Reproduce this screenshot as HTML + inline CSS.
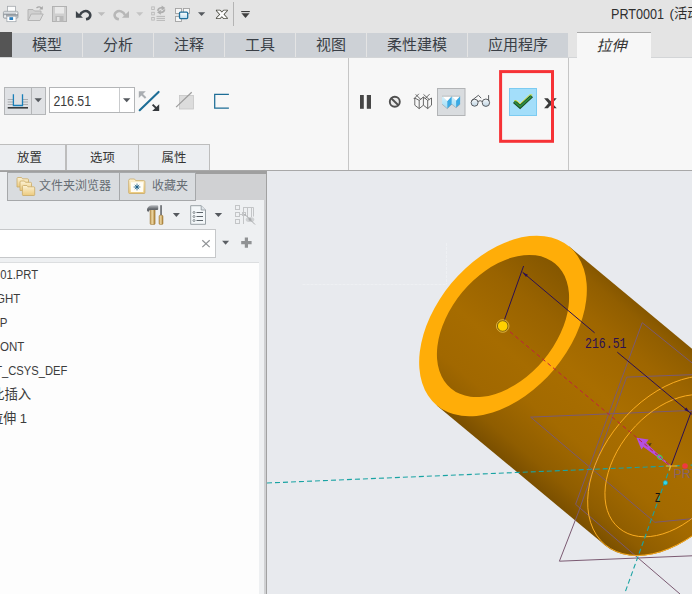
<!DOCTYPE html>
<html lang="zh-CN">
<head>
<meta charset="utf-8">
<title>PRT0001</title>
<style>
html,body{margin:0;padding:0;}
body{width:692px;height:594px;overflow:hidden;position:relative;background:#f7f7f7;
 font-family:"Liberation Sans","Noto Sans CJK SC",sans-serif;color:#3c3c3c;}
.abs{position:absolute;}
#qbar{left:0;top:0;width:692px;height:32px;background:#e4e4e4;}
#title{left:611.5px;top:0;font-size:14.6px;color:#2e2e2e;white-space:nowrap;line-height:20px;}
#t1{position:absolute;left:-1px;top:4px;transform:scaleX(.865);transform-origin:0 50%;}
#t2{position:absolute;left:58px;top:3.5px;font-size:13.4px;}
#tabrow{left:0;top:32px;width:692px;height:26px;background:#e4e4e4;}
.tab{position:absolute;top:33px;height:25px;background:#cdd1d6;color:#3a3f46;font-size:15px;line-height:24px;text-align:center;}
#darkblk{left:0;top:32px;width:12px;height:26px;background:#555;}
#acttab{left:577px;top:32px;width:74px;height:27px;background:#f7f7f7;border-top:1px solid #a9a9a9;box-sizing:border-box;padding-right:5px;
 font-size:15px;line-height:26px;text-align:center;font-style:italic;color:#333;}
#ribbon{left:0;top:58px;width:692px;height:112px;background:#f7f7f7;}
.vsep{position:absolute;width:1px;background:#c9c9c9;}
.stab{position:absolute;top:144px;height:26px;box-sizing:border-box;border:1px solid #bdbdbd;border-bottom:none;background:#eceef1;
 font-size:12.4px;line-height:27px;text-align:center;color:#333;}
#hline{left:0;top:170px;width:692px;height:1px;background:#a8a8a8;}
#lp{left:0;top:171px;width:267px;height:423px;background:#eef0f2;}
#lptop{left:0;top:171px;width:267px;height:3px;background:#9f9f9f;}
#lptabs{left:0;top:174px;width:266px;height:26px;background:#d0d1d3;}
.lptab{position:absolute;top:172px;height:29px;box-sizing:border-box;background:#d9dcdf;border:1px solid #a6a8aa;
 font-size:12px;line-height:26px;color:#666c73;white-space:nowrap;}
#lpborder{left:264px;top:174px;width:3px;height:420px;background:#d0d1d3;border-right:1px solid #a1a1a1;box-sizing:border-box;}
#search{left:-1px;top:229px;width:217px;height:29px;box-sizing:border-box;border:1px solid #c6c8ca;background:#fff;}
#tree{left:0;top:262px;width:259px;height:332px;background:#fdfdfd;border-top:1px solid #dcdee0;box-sizing:border-box;}
.ti{position:absolute;font-size:13.4px;color:#3c3c3c;white-space:nowrap;line-height:16px;transform-origin:100% 50%;}
#vp{left:267px;top:171px;width:425px;height:423px;background:#e8eaee;}
</style>
</head>
<body>
<div class="abs" id="qbar"></div>
<svg class="abs" style="left:0;top:0" width="260" height="32" viewBox="0 0 260 32">
<!-- printer -->
<g>
<defs><linearGradient id="prn" x1="0" y1="0" x2="0" y2="1"><stop offset="0" stop-color="#eef0f2"/><stop offset="0.30" stop-color="#c9cdd1"/><stop offset="0.50" stop-color="#858b92"/><stop offset="0.68" stop-color="#b9bdc2"/><stop offset="1" stop-color="#e4e6e9"/></linearGradient></defs>
<rect x="7.500" y="6.300" width="8" height="6" fill="#fcfcfc" stroke="#a4a8ad" stroke-width="0.800"/>
<rect x="3.400" y="11.300" width="14.600" height="7" rx="1.300" fill="url(#prn)" stroke="#8d939a" stroke-width="0.700"/>
<rect x="6.900" y="16.200" width="9.100" height="5.500" fill="#ffffff" stroke="#9aa0a6" stroke-width="0.700"/>
<rect x="9.400" y="17.200" width="3.700" height="2.800" fill="#2a7fc0"/>
<rect x="4.400" y="14.800" width="1.300" height="2.200" fill="#ffffff"/><rect x="16" y="13" width="1.200" height="1.200" fill="#ffffff"/>
</g>
<!-- open folder (disabled) -->
<g fill="#d0d0d0" stroke="#b4b4b4" stroke-width="1">
<path d="M28 20.5 V9.5 h5 l1.5 1.5 h6.5 v3"/>
<path d="M28 20.5 l3.2-6.5 h12 l-3.2 6.5 z" fill="#dadada"/>
<path d="M36.5 8 q3-2.5 5 0.5" fill="none" stroke="#a8a8a8" stroke-width="1.4"/>
<path d="M42.8 6 v3.6 h-3.6 z" fill="#a8a8a8" stroke="none"/>
</g>
<!-- save (disabled) -->
<g>
<rect x="52.5" y="6.5" width="14" height="15" fill="#cfcfcf" stroke="#b2b2b2"/>
<rect x="55" y="7" width="9" height="6.5" fill="#e9e9e9"/>
<rect x="55.5" y="16" width="8" height="5.5" fill="#b9b9b9"/>
<rect x="57" y="17" width="2.5" height="4" fill="#e4e4e4"/>
</g>
<!-- undo -->
<path d="M79.800 15.400 C81.200 11.200 86 9.900 88.800 12.200 C91.600 14.800 90.400 18.600 86 19.300" fill="none" stroke="#3d4349" stroke-width="2.500" stroke-linecap="butt"/>
<path d="M75.900 10.900 V17.700 H83 z" fill="#3d4349"/>
<path d="M97.800 12.200 h7.400 l-3.700 3.900 z" fill="#bdbdbd"/>
<!-- redo (disabled) -->
<path d="M125.100 15.400 C123.700 11.200 118.900 9.900 116.100 12.200 C113.300 14.800 114.500 18.600 118.900 19.300" fill="none" stroke="#b7b7b7" stroke-width="2.500"/>
<path d="M129 10.900 V17.700 H121.900 z" fill="#b7b7b7"/>
<path d="M136.200 12.200 h7 l-3.500 3.800 z" fill="#c4c4c4"/>
<!-- regenerate list (disabled) -->
<g fill="none" stroke="#b9b9b9" stroke-width="0.900">
<rect x="151.700" y="6.900" width="2.600" height="2.600"/><rect x="151.700" y="12.300" width="2.600" height="2.600"/><rect x="151.700" y="17.500" width="2.600" height="2.600"/>
<path d="M156.500 16.400 h8.500 M156.500 18.400 h8.500 M156.500 20.400 h8.500" stroke-width="1"/>
<path d="M157.800 10.800 q0.600-3.400 4.400-3 M164.600 9.400 q-0.600 3.400 -4.400 3" stroke-width="1.700" stroke="#aeaeae"/>
</g>
<path d="M161.600 5.400 l3.800 2.600 l-3.800 2.400 z M160.800 14.800 l-3.800-2.600 l3.800-2.400 z" fill="#aeaeae"/>
<!-- windows -->
<defs><linearGradient id="wn" x1="0" y1="0" x2="0" y2="1"><stop offset="0" stop-color="#ffffff"/><stop offset="1" stop-color="#b9dcf0"/></linearGradient></defs>
<g>
<rect x="175.500" y="8.500" width="6" height="5" fill="#f6f6f6" stroke="#a2a2a2" stroke-width="0.900"/>
<rect x="183.500" y="8.500" width="6" height="5" fill="#f6f6f6" stroke="#a2a2a2" stroke-width="0.900"/>
<rect x="175.500" y="16.500" width="6" height="5" fill="#f6f6f6" stroke="#a2a2a2" stroke-width="0.900"/>
<rect x="179.500" y="12.200" width="8.200" height="6.400" rx="1" fill="url(#wn)" stroke="#1f6f9c" stroke-width="1.300"/>
</g>
<path d="M198 12.200 h7.200 l-3.600 3.900 z" fill="#55595e"/>
<!-- close -->
<g stroke="#46463c" stroke-width="1.500" stroke-linejoin="round" fill="#46463c">
<path d="M216.600 10.400 H219.900 L227.100 18.200 H223.800 z"/><path d="M227.100 10.400 H223.800 L216.600 18.200 H219.900 z"/>
</g>
<g fill="#fdfdfd"><path d="M216.600 10.400 H219.900 L227.100 18.200 H223.800 z"/><path d="M227.100 10.400 H223.800 L216.600 18.200 H219.900 z"/></g>
<rect x="233" y="2" width="1" height="24" fill="#b4b4b4"/>
<rect x="241.200" y="11" width="8.600" height="1.100" fill="#3f3f3f"/>
<path d="M241.400 13.300 h8.200 l-4.100 4.700 z" fill="#3f3f3f"/>
</svg>
<div class="abs" id="title"><span id="t1">PRT0001</span><span id="t2">(活动</span></div>
<div class="abs" id="tabrow"></div>
<div class="abs" id="darkblk"></div>
<div class="tab" style="left:12px;width:70px;">模型</div>
<div class="tab" style="left:83px;width:70px;">分析</div>
<div class="tab" style="left:154px;width:70px;">注释</div>
<div class="tab" style="left:225px;width:70px;">工具</div>
<div class="tab" style="left:296px;width:70px;">视图</div>
<div class="tab" style="left:367px;width:100px;">柔性建模</div>
<div class="tab" style="left:468px;width:100px;">应用程序</div>
<div class="abs" id="ribbon"></div>
<div class="abs" style="left:0;top:57px;width:692px;height:1px;background:#d3d5d7;"></div>
<div class="abs" id="acttab">拉伸</div>
<svg class="abs" style="left:0;top:58px" width="692" height="112" viewBox="0 58 692 112" font-family="'Liberation Sans','Noto Sans CJK SC',sans-serif">
<!-- separators -->
<rect x="348" y="58" width="1" height="112" fill="#c6c6c6"/>
<rect x="568" y="58" width="1" height="112" fill="#c6c6c6"/>
<!-- depth-type split button -->
<rect x="4.500" y="87.500" width="41" height="27" fill="#dfe1e4" stroke="#b4b6b8"/>
<rect x="31" y="88" width="1" height="26" fill="#b4b6b8"/>
<path d="M7.700 99.500 H13 M22.800 99.500 H28 M7.700 102 H13 M22.800 102 H28 M7.700 104.500 H13 M22.800 104.500 H28" stroke="#a4a6a8" stroke-width="0.900" fill="none"/>
<path d="M13.400 94.200 V105.500 H22.500 V94.200" stroke="#1a7fb8" stroke-width="1.300" fill="none"/>
<path d="M7.700 107.800 H28" stroke="#3a3c3e" stroke-width="1.600" fill="none"/>
<path d="M34.500 98.300 h7.400 l-3.700 3.900 z" fill="#55595e"/>
<!-- value input -->
<rect x="49.500" y="87.500" width="85" height="25" fill="#ffffff" stroke="#b3b5b7"/>
<rect x="119" y="88" width="1" height="24" fill="#c9cbcd"/>
<text x="53.400" y="105.600" font-size="14.300" fill="#3a3a3a" textLength="37.600" lengthAdjust="spacingAndGlyphs">216.51</text>
<path d="M123 98.300 h7.400 l-3.700 3.900 z" fill="#55595e"/>
<!-- flip direction -->
<path d="M139.700 110.200 L158.600 91.900" stroke="#1d6d96" stroke-width="2.100" fill="none" stroke-linecap="round"/>
<path d="M138.800 91.300 h7 l-7 6.800 z" fill="#a9adb1"/><path d="M141.500 94 L145.600 98" stroke="#a9adb1" stroke-width="2"/>
<path d="M159.200 111.100 h-7 l7-6.800 z" fill="#34383c"/><path d="M156.500 108.400 L152.600 104.600" stroke="#34383c" stroke-width="2"/>
<!-- remove material (disabled) -->
<rect x="179.500" y="95.500" width="14" height="13.500" fill="#dcdcdc" stroke="#c6c6c6" stroke-width="0.800"/>
<path d="M176.100 107.100 L191.700 92.300" stroke="#9c9c9c" stroke-width="1.200"/>
<!-- thicken sketch -->
<path d="M228.900 94.400 H214.700 V108.200 H228.900" stroke="#1d6d96" stroke-width="1.250" fill="none"/>
<!-- pause -->
<rect x="360" y="95" width="3.800" height="13.800" fill="#474747"/><rect x="366.800" y="95" width="4.200" height="13.800" fill="#474747"/>
<!-- no preview -->
<circle cx="394.800" cy="101.700" r="5" fill="#ececec" stroke="#505050" stroke-width="1.900"/>
<path d="M391.200 98.200 L398.400 105.200" stroke="#505050" stroke-width="1.900"/>
<!-- unattached / wire cube -->
<g fill="none" stroke="#4f4f4f" stroke-width="0.850">
<path d="M414.800 98 V105.200 L419.200 108.600 L423.400 105.200 L427.700 108.600 L431.500 105.200 V98"/>
<path d="M419.200 100.400 V108.600 M423.400 97 V105.200 M427.700 100.400 V108.600"/>
<path d="M413.700 99 L418.900 93.800 M415.700 94.400 L420.900 99.600 M423.500 94.400 L429.300 99.600 M429.600 94.100 L424.800 99"/>
<path d="M414.800 98 L419.200 100.400 L423.400 97 L427.700 100.400 L431.500 98"/>
</g>
<!-- solid preview (selected) -->
<defs><linearGradient id="lb" x1="0" y1="0" x2="0" y2="1"><stop offset="0" stop-color="#d3f1fc"/><stop offset="1" stop-color="#9fdcf6"/></linearGradient></defs>
<rect x="437.500" y="88.500" width="27.500" height="27" fill="#d9dcdf" stroke="#b2b4b6"/>
<defs><linearGradient id="lens" x1="0" y1="0" x2="0" y2="1"><stop offset="0" stop-color="#f7f9fa"/><stop offset="1" stop-color="#bdd3e3"/></linearGradient></defs>
<g>
<path d="M442.100 96.200 H451.800 L447.300 101.200 z" fill="#ffffff"/>
<path d="M442.100 96.200 L447.300 101.200 V108.700 L442.100 104.200 z" fill="url(#lb)"/>
<path d="M451.800 96.200 L447.300 101.200 V108.700 L451.800 104.200 z" fill="#3aaae4"/>
<path d="M451.800 96.200 H460.100 L456.100 100.700 z" fill="#ffffff"/>
<path d="M451.800 96.200 L456.100 100.700 V107.800 L451.800 104.200 z" fill="url(#lb)"/>
<path d="M460.100 96.200 L456.100 100.700 V107.800 L460.100 104.200 z" fill="#3aaae4"/>
<path d="M442.100 96.200 H460.100 M442.100 104.200 L447.300 108.700 L451.800 104.200 L456.100 107.800 L460.100 104.200" fill="none" stroke="#9a9c9e" stroke-width="0.600"/>
</g>
<!-- glasses -->
<g fill="none" stroke="#5a5d61" stroke-width="1">
<circle cx="474.600" cy="102.700" r="3.500" fill="url(#lens)"/><circle cx="485.900" cy="102.700" r="3.700" fill="url(#lens)"/>
<path d="M478 101.500 q2.100-1.600 4.300 0 M471.600 100.600 L478.400 95.300 L481.200 98.200 M488.600 95.100 V101"/>
</g>
<!-- cancel X -->
<path d="M544.100 98.300 H547.900 L556.700 108.200 H552.900 z" fill="#3a3a3a"/><path d="M556.700 98.300 H552.900 L544.100 108.200 H547.900 z" fill="#3a3a3a"/>
<!-- red highlight -->
<rect x="500.600" y="71.600" width="51.900" height="69.700" fill="none" stroke="#f63236" stroke-width="3"/>
<!-- OK button -->
<rect x="509.500" y="88.500" width="27" height="27" fill="#a3defa" stroke="#7ccbf1"/>
<path d="M514.200 101.600 L520.100 106.900 L531.800 96" fill="none" stroke="#1d4f24" stroke-width="3.600" stroke-linejoin="miter"/>
<path d="M514.600 101.900 L520.100 106.700 L531.400 96.300" fill="none" stroke="#2f8f45" stroke-width="1.700" stroke-linejoin="miter"/>
<path d="M514.300 100.600 L516.800 100.900 L520.100 103.900 L529.500 95 L532.300 94.900" fill="none" stroke="#d9e21e" stroke-width="0.900" stroke-linejoin="round"/>
</svg>

<div class="stab" style="left:-7px;width:73px;">放置</div>
<div class="stab" style="left:66px;width:73px;">选项</div>
<div class="stab" style="left:138px;width:72px;">属性</div>
<div class="abs" id="hline"></div>
<div class="abs" id="lp"></div>
<div class="abs" id="lptop"></div>
<div class="abs" id="lptabs"></div>
<div class="abs" id="lpborder"></div>
<div class="abs" style="left:0;top:172px;width:7px;height:28px;background:#eceef0;"></div>
<div class="lptab" style="left:7px;width:113px;padding-left:31px;">文件夹浏览器</div>
<div class="lptab" style="left:119px;width:77px;padding-left:32px;">收藏夹</div>
<!--LPICONS-->
<div class="abs" id="search"></div>
<svg class="abs" style="left:0;top:171px" width="267" height="92" viewBox="0 171 267 92">
<defs>
<linearGradient id="fold" x1="0" y1="0" x2="0" y2="1"><stop offset="0" stop-color="#fdf3d6"/><stop offset="1" stop-color="#ecca7d"/></linearGradient>
<linearGradient id="wood" x1="0" y1="0" x2="1" y2="0"><stop offset="0" stop-color="#e6c27a"/><stop offset="1" stop-color="#b8873a"/></linearGradient>
</defs>
<!-- folders icon -->
<g stroke="#c9a964" stroke-width="0.800">
<path d="M17 187 v-8.500 q0-1 1-1 h3.500 l1 1.300 h5 q1 0 1 1 v7.200 z" fill="url(#fold)"/>
<path d="M20 190.500 v-8.500 q0-1 1-1 h3.500 l1 1.300 h5 q1 0 1 1 v7.200 z" fill="url(#fold)"/>
<path d="M23 195.500 q-0.600 0-0.600-0.800 v-8.200 q0-1 1-1 h3.500 l1 1.300 h5.800 q1 0 1 1 v6.900 q0 0.800-0.800 0.800 z" fill="url(#fold)"/>
</g>
<!-- favourites folder -->
<path d="M129.500 193.500 q-0.800 0-0.800-0.800 v-12.200 q0-1.500 1.500-1.500 h4.300 l1.200 1.600 h8 q1.200 0 1.200 1.200 v10.900 q0 0.800-0.800 0.800 z" fill="url(#fold)" stroke="#c9a964" stroke-width="0.800"/>
<rect x="130.800" y="182.200" width="12.400" height="9.800" fill="#fffdf6"/>
<g stroke="#1c5f8a" stroke-width="0.800"><path d="M137 183.600 v6.800 M133.600 187 h6.800 M134.800 184.800 l4.400 4.400 M139.200 184.800 l-4.400 4.400"/></g><circle cx="137" cy="187" r="1.300" fill="#1c5f8a"/>
<!-- hammer & screwdriver -->
<linearGradient id="wood2" x1="0" y1="0" x2="1" y2="0"><stop offset="0" stop-color="#c39a52"/><stop offset="0.45" stop-color="#ecd6a2"/><stop offset="1" stop-color="#a87b2e"/></linearGradient>
<linearGradient id="steel" x1="0" y1="0" x2="0" y2="1"><stop offset="0" stop-color="#b9bcc0"/><stop offset="0.5" stop-color="#6a6e73"/><stop offset="1" stop-color="#4a4d51"/></linearGradient>
<rect x="150.100" y="209.500" width="5" height="15" rx="1" fill="url(#wood2)" stroke="#96702c" stroke-width="0.500"/>
<path d="M146.900 210.200 q0.300-4.200 4.600-5 h5.700 q1 0 1 1 v3 q0 0.800-1 0.800 h-7 q-1.600 0.400-2 2.200 z" fill="url(#steel)"/>
<rect x="160.300" y="205.200" width="1.500" height="10.500" fill="#5a5e63"/>
<rect x="159" y="215.200" width="4" height="9.300" rx="1.200" fill="url(#wood2)" stroke="#96702c" stroke-width="0.500"/>
<path d="M172.900 213 h7 l-3.500 3.900 z" fill="#55595e"/>
<!-- document list -->
<path d="M190.700 205.700 h10.500 l4.300 4.300 v14.300 h-14.800 z" fill="#f3f7f9" stroke="#8f979d" stroke-width="0.900"/>
<path d="M201.200 205.700 v4.300 h4.300" fill="#dfe5e9" stroke="#8f979d" stroke-width="0.800"/>
<g stroke="#5d656b" stroke-width="1"><path d="M196.500 212.500 h6.500 M196.500 216.500 h6.500 M196.500 220.500 h6.500"/></g>
<g fill="none" stroke="#5d656b" stroke-width="0.700"><circle cx="194" cy="212.500" r="1"/><circle cx="194" cy="216.500" r="1"/><circle cx="194" cy="220.500" r="1"/></g>
<path d="M214.700 213 h7.400 l-3.700 3.900 z" fill="#55595e"/>
<!-- tree filter (disabled) -->
<g fill="none" stroke="#c3c5c7" stroke-width="1">
<rect x="235.500" y="205.500" width="4" height="4"/><rect x="235.500" y="212.500" width="4" height="4"/><rect x="235.500" y="219.500" width="4" height="4"/>
<path d="M239.500 214.500 h6 M243.500 207 v17 M247.500 207 v10 M251.500 207 v10 M243.500 207.500 h10 v9"/>
<rect x="242.500" y="212.500" width="3" height="3"/>
</g>
<ellipse cx="250" cy="219.500" rx="4.300" ry="2.600" fill="#cfd1d3"/><circle cx="250" cy="219.500" r="1.400" fill="#aeb0b2"/>
<path d="M244.500 214 L255 224.500" stroke="#a2a4a6" stroke-width="0.900"/>
<!-- search box widgets -->
<path d="M202.300 240.300 l7.400 6.800 M209.700 240.300 l-7.400 6.800" stroke="#909396" stroke-width="1.200" fill="none"/>
<path d="M222.100 240.800 h7 l-3.500 4 z" fill="#5b5f64"/>
<path d="M246.400 237.400 v10.400 M241.200 242.600 h10.400" stroke="#909294" stroke-width="3.200" fill="none"/>
</svg>

<div class="abs" id="tree"></div>
<div class="ti" style="top:267px;right:653.5px;transform:scaleX(0.840);">01.PRT</div>
<div class="ti" style="top:291px;right:671.4px;transform:scaleX(0.860);">GHT</div>
<div class="ti" style="top:315px;right:684.7px;transform:scaleX(0.860);">OP</div>
<div class="ti" style="top:339px;right:667.8px;transform:scaleX(0.860);">ONT</div>
<div class="ti" style="top:363px;right:624.7px;transform:scaleX(0.835);">T_CSYS_DEF</div>
<div class="ti" style="top:387px;right:660.8px;transform:scaleX(1.000);">此插入</div>
<div class="ti" style="top:411px;right:665.3px;transform:scaleX(0.970);">拉伸 1</div>
<div class="abs" id="vp"></div>
<svg class="abs" style="left:267px;top:171px" width="425" height="423" viewBox="267 171 425 423" font-family="'Liberation Sans','Noto Sans CJK SC',sans-serif">
<defs>
<linearGradient id="gbody" gradientUnits="userSpaceOnUse" x1="569.2" y1="246.6" x2="436.8" y2="405.4">
<stop offset="0" stop-color="#865700"/><stop offset="0.06" stop-color="#915e00"/><stop offset="0.20" stop-color="#9e6600"/><stop offset="0.45" stop-color="#a96e00"/><stop offset="0.70" stop-color="#a36a00"/><stop offset="0.90" stop-color="#8f5d00"/><stop offset="1" stop-color="#7a4f00"/>
</linearGradient>
<linearGradient id="ginner" gradientUnits="userSpaceOnUse" x1="555.0" y1="263.6" x2="451.0" y2="388.4">
<stop offset="0" stop-color="#855700"/><stop offset="0.28" stop-color="#996300"/><stop offset="0.60" stop-color="#a66c00"/><stop offset="0.88" stop-color="#a16800"/><stop offset="1" stop-color="#966100"/>
</linearGradient>
</defs>
<!-- faint construction lines -->
<path d="M302.500 284.500 H446.500 M446.500 243 V284.500" stroke="#eef0f3" stroke-width="1" stroke-dasharray="3 1" fill="none"/>
<!-- cylinder body -->
<g fill="url(#gbody)">
<path d="M737.19 386.26 A103.4 67.0 -50.2 1 1 604.81 545.14 A103.4 67.0 -50.2 1 1 737.19 386.26 z"/>
<path d="M569.2 246.6 L737.2 386.3 L604.8 545.1 L436.8 405.4 z"/>
</g>
<!-- front ring -->
<ellipse cx="503.0" cy="326.0" rx="103.4" ry="67.0" transform="rotate(-50.2 503.0 326.0)" fill="#ffad08"/>
<path d="M554.98 263.62 A81.2 52.6 -50.2 1 1 451.02 388.38 A81.2 52.6 -50.2 1 1 554.98 263.62 z" fill="url(#ginner)"/>

<!-- datum planes -->
<g fill="none" stroke="#7b5a72" stroke-width="1">
<path d="M692 410.400 L530.600 417.100 L654.900 522.300 L692 518.700"/>
<path d="M692 362.900 L642.200 322.700 L575.600 504.300 L680 594"/>
<path d="M692 374.700 L626.600 377.100 L578.500 512 L559.400 561.200 L692 555.800"/>
</g>
<!-- sketch ellipses -->
<path d="M736.87 386.64 A102.9 66.5 -50.2 1 1 605.13 544.76 A102.9 66.5 -50.2 1 1 736.87 386.64 z" fill="none" stroke="#ffb022" stroke-width="0.950"/>
<path d="M722.98 403.32 A81.2 52.6 -50.2 1 1 619.02 528.08 A81.2 52.6 -50.2 1 1 722.98 403.32 z" fill="none" stroke="#ffb022" stroke-width="0.950"/>
<!-- csys dashed axes -->
<path d="M267 483 L692 465.100" stroke="#19a3a3" stroke-width="1.100" stroke-dasharray="5 3" fill="none"/>
<path d="M670.600 466 L624.500 594" stroke="#19a3a3" stroke-width="1.100" stroke-dasharray="5 3" fill="none"/>
<!-- dimension -->
<g stroke="#2b0f52" stroke-width="1" fill="none">
<path d="M503.800 321.500 L523.600 266"/>
<path d="M522.600 272.200 L594.600 332.800 M617.300 352.200 L692 414.400"/>
<path d="M691.300 411.500 L671.300 465.300"/>
</g>
<path d="M522.8 272.4 L528.0 274.7 L526.0 277.1 z" fill="#2b0f52"/>
<path d="M689.5 412.3 L684.3 410.0 L686.3 407.6 z" fill="#2b0f52"/>
<text x="585" y="348.300" font-family="'Liberation Mono',monospace" font-size="15.500" fill="#2b0f52" textLength="41.500" lengthAdjust="spacingAndGlyphs">216.51</text>
<!-- drag handle -->
<circle cx="502.700" cy="326" r="5.300" fill="#ffd000" stroke="#7d6410" stroke-width="1"/>
<circle cx="502.700" cy="326" r="6.300" fill="none" stroke="#e9c24a" stroke-width="0.800"/>
<!-- direction arrow -->
<path d="M670.600 466 L645.900 443.300 L643.300 446.400 z" fill="#b44fe0" stroke="#b44fe0" stroke-width="0.800" stroke-linejoin="round"/>
<path d="M636.500 437.800 L648.600 439.400 L641.400 449.500 z" fill="#b44fe0"/>
<!-- axis -->
<path d="M510 331.800 L669 464.500" stroke="#c0203f" stroke-width="1" stroke-dasharray="4 3" fill="none"/>
<ellipse cx="659.900" cy="457.300" rx="2.600" ry="1.800" transform="rotate(40 659.900 457.300)" fill="none" stroke="#3fd06a" stroke-width="1"/>
<path d="M648.600 443 l1.300 1.900 l1.300-1.900 M649.900 444.900 v1" stroke="#222" stroke-width="0.800" fill="none"/>
<!-- csys origin -->
<path d="M665.800 466 H677.400 M670.600 466 L669.200 470.500" stroke="#ffb21e" stroke-width="1.200" fill="none"/>
<circle cx="685" cy="466" r="2.800" fill="#f0383f"/>
<circle cx="665.400" cy="482.800" r="2.200" fill="#37d6e6" stroke="#189aa8" stroke-width="0.600"/>
<text x="655" y="502" font-size="13.500" fill="#111" textLength="5.200" lengthAdjust="spacingAndGlyphs">Z</text>
<text x="673.400" y="477.500" font-size="13" fill="#85626a" textLength="24.500" lengthAdjust="spacingAndGlyphs">PRT</text>

</svg>

</body>
</html>
